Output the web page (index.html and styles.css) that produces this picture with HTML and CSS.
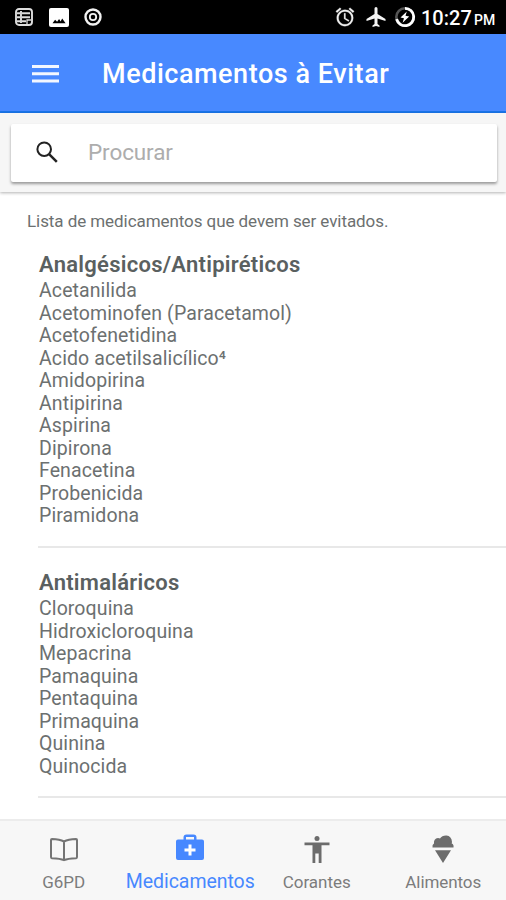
FILE: index.html
```html
<!DOCTYPE html>
<html lang="pt">
<head>
<meta charset="utf-8">
<title>Medicamentos à Evitar</title>
<link rel="stylesheet" href="styles.css">
</head>
<body>
<div class="app">
  <div class="status">
    <svg class="st-list" width="18" height="18" viewBox="0 0 18 18" fill="none" stroke="#ddd" stroke-width="1.9"><rect x="1" y="1" width="16" height="16" rx="3"/><path d="M2 5.2h3M7 5.2h8M2 9.3h3M7 9.3h8M2 13.3h3M7 13.3h4M6 3v12"/><path d="M12 16v-4h4" stroke-width="1.3"/></svg>
    <svg class="st-img" width="20" height="19" viewBox="0 0 20 19"><rect width="20" height="19" rx="2" fill="#fff"/><path d="M3.500 15.300l2.600-3.500 2 2 2-2.800 1.500 2.400 1.600-3 3.400 4.900z" fill="#000"/></svg>
    <svg class="st-dot" width="18" height="18" viewBox="0 0 18 18" fill="none" stroke="#f2f2f2"><circle cx="9" cy="9" r="7.500" stroke-width="2.400"/><circle cx="9" cy="9" r="3.200" stroke-width="1.800"/></svg>
    <span class="spacer"></span>
    <svg class="st-alarm" width="22" height="22" viewBox="0 0 24 24" fill="#f0f0f0" stroke="#f0f0f0" stroke-width=".3"><path d="M22 5.720l-4.600-3.860-1.290 1.530 4.600 3.860L22 5.720zM7.880 3.390L6.600 1.860 2 5.710l1.290 1.530 4.590-3.850zM12.500 8H11v6l4.750 2.850.75-1.230-4-2.370V8zM12 4c-4.970 0-9 4.030-9 9s4.020 9 9 9a9 9 0 0 0 0-18zm0 16c-3.870 0-7-3.130-7-7s3.130-7 7-7 7 3.130 7 7-3.130 7-7 7z"/></svg>
    <svg class="st-plane" width="24" height="24" viewBox="0 0 24 24" fill="#f4f4f4"><path d="M21.500 16v-2l-8-5V3.500a1.500 1.500 0 0 0-3 0V9l-8 5v2l8-2.500V19l-2 1.500V22l3.500-1 3.500 1v-1.500L13.500 19v-5.500z"/></svg>
    <svg class="st-batt" width="22" height="22" viewBox="0 0 22 22"><circle cx="11" cy="11" r="8.700" fill="none" stroke="#555" stroke-width="2.600"/><path d="M11 2.300A8.700 8.700 0 1 1 2.600 13.200" fill="none" stroke="#fff" stroke-width="2.800"/><path d="M12.800 5.500L6.500 11.500l3.500.7-1.400 4.600 6.600-6.300-3.700-.7z" fill="#fff"/></svg>
    <span class="time">10:27</span><span class="pm">PM</span>
  </div>
  <header class="bar">
    <svg width="27" height="18" viewBox="0 0 27 18" fill="#f3f7ff"><path d="M0 0h27v3H0zM0 7.300h27v3H0zM0 14.600h27v3H0z"/></svg>
    <h1>Medicamentos à Evitar</h1>
  </header>
  <div class="search-area">
    <div class="search">
      <svg width="22" height="22" viewBox="0 0 22 22" fill="none" stroke="#222"><circle cx="8.200" cy="8.200" r="6.800" stroke-width="2"/><path d="M12.800 12.800l8 8" stroke-width="2.500"/></svg>
      <span>Procurar</span>
    </div>
  </div>
  <main>
    <p class="intro">Lista de medicamentos que devem ser evitados.</p>
    <section>
      <h2>Analgésicos/Antipiréticos</h2>
      <ul>
        <li>Acetanilida</li><li>Acetominofen (Paracetamol)</li><li>Acetofenetidina</li><li>Acido acetilsalicílico⁴</li><li>Amidopirina</li><li>Antipirina</li><li>Aspirina</li><li>Dipirona</li><li>Fenacetina</li><li>Probenicida</li><li>Piramidona</li>
      </ul>
    </section>
    <section>
      <h2>Antimaláricos</h2>
      <ul>
        <li>Cloroquina</li><li>Hidroxicloroquina</li><li>Mepacrina</li><li>Pamaquina</li><li>Pentaquina</li><li>Primaquina</li><li>Quinina</li><li>Quinocida</li>
      </ul>
    </section>
  </main>
  <nav>
    <div class="tab">
      <svg width="30" height="30" viewBox="0 0 30 30" fill="none" stroke="#747474" stroke-width="2" stroke-linejoin="round"><path d="M15 7.500C12 6 7 5.200 3 5q-1 0-1 1v17q0 1 1 1.200c4 .1 9 .5 12 2 3-1.500 8-1.900 12-2q1-.2 1-1.200V6q0-1-1-1c-4 .2-9 1-12 2.500zM15 7.500V26"/></svg>
      <span>G6PD</span>
    </div>
    <div class="tab active">
      <svg width="30" height="30" viewBox="0 0 30 30"><path d="M3 5.500H8.500V3.500q0-3 3-3h7q3 0 3 3v2H27q2 0 2 2v16.500q0 2-2 2H3q-2 0-2-2V7.500q0-2 2-2zM11 5.500h8V3h-8z" fill="#4788ff" fill-rule="evenodd"/><path d="M13.500 10.500h3v4h4v3h-4v4h-3v-4h-4v-3h4z" fill="#fff"/></svg>
      <span>Medicamentos</span>
    </div>
    <div class="tab">
      <svg width="30" height="30" viewBox="0 0 30 30" fill="#6c6c6c"><circle cx="15" cy="4.500" r="2.500"/><path d="M2.500 8.500h25v2.800H19.500V29h-2.800v-9.500h-3.400V29h-2.800V11.300H2.500z"/></svg>
      <span>Corantes</span>
    </div>
    <div class="tab">
      <svg width="30" height="30" viewBox="0 0 30 30" fill="#6c6c6c"><path d="M4.500 13.500Q4 10.500 6 9.500 5.500 4.500 10 4q1.200 0 2 .6Q14 1.300 18.500 1.500q5 .5 5.500 6.500l-.3 1.500q2.300.8 1.800 4zM7 16.200h16L15 29z"/></svg>
      <span>Alimentos</span>
    </div>
  </nav>
</div>
</body>
</html>
```
FILE: styles.css
```css
* { box-sizing: border-box; }
body { margin: 0; font-family: Roboto, "Liberation Sans", sans-serif; background: #fff; }
h1, h2, p, ul { margin: 0; padding: 0; }
ul { list-style: none; }
svg { display: block; flex: none; }
.app { width: 506px; height: 900px; display: flex; flex-direction: column; overflow: hidden; }
.status { height: 34px; flex: none; background: #000; display: flex; align-items: center; padding: 0 10px 0 15px; color: #fff; }
.st-img { margin-left: 16px; }
.st-dot { margin-left: 15px; }
.spacer { flex: 1; }
.st-plane { margin-left: 8px; }
.st-batt { margin-left: 6px; }
.time { margin-left: 5px; font-size: 20px; font-weight: 500; width: 49px; white-space: nowrap; padding-top: 2px; }
.pm { margin-left: 4px; font-size: 14px; font-weight: 500; width: 22px; padding-top: 6px; }
.bar { height: 79px; flex: none; background: #4889ff; border-bottom: 2px solid #1a75eb; display: flex; align-items: center; padding: 2px 32px 0; }
.bar h1 { margin-left: 43px; color: #fff; font-size: 27px; font-weight: 500; letter-spacing: .54px; line-height: 36px; white-space: nowrap; }
.search-area { height: 79px; flex: none; background: #f6f6f6; padding: 11px 9px 0 11px; box-shadow: 0 1px 3px rgba(0,0,0,.3); position: relative; }
.search { height: 58px; background: #fff; border-radius: 2px; box-shadow: 0 2px 3px rgba(0,0,0,.38); display: flex; align-items: center; padding: 0 0 2px 25px; }
.search span { margin-left: 30px; font-size: 22.500px; letter-spacing: -.1px; color: #adadad; }
main { flex: 1; min-height: 0; padding-top: 17px; overflow: hidden; color: #6c7070; }
.intro { padding-left: 27px; font-size: 17px; letter-spacing: -.07px; line-height: 24px; }
section { margin-left: 38px; padding: 18px 0 18px 1px; border-bottom: 2px solid #e8e8e8; }
section + section { padding-top: 21px; }
h2 { font-size: 22px; font-weight: 600; letter-spacing: .26px; line-height: 28px; color: #5a6060; }
ul { padding-top: 1px; }
li { font-size: 19.500px; letter-spacing: .1px; line-height: 22.550px; }
nav { height: 81px; flex: none; background: #f7f7f7; border-top: 2px solid #ececec; display: flex; }
.tab { width: 126.500px; display: flex; flex-direction: column; align-items: center; padding: 13px 0 0 1px; color: #7c7c7c; font-size: 17px; }
.tab span { line-height: 24px; margin-top: 6px; white-space: nowrap; }
.tab:last-child span { letter-spacing: -.07px; }
.active { color: #4788ff; font-size: 19.500px; }
.active span { letter-spacing: -.05px; }
```
